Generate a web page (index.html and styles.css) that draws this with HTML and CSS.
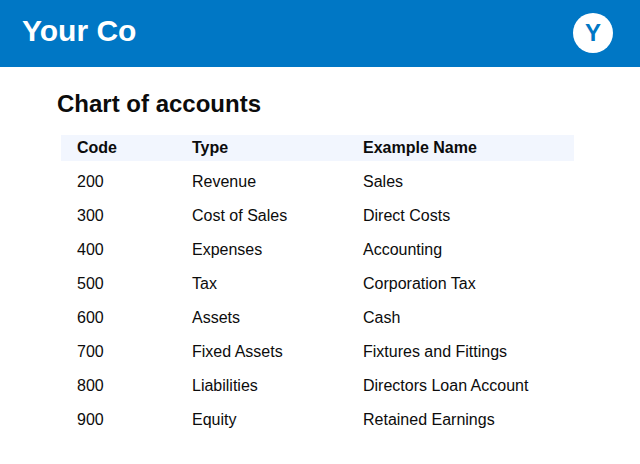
FILE: index.html

```html
<!DOCTYPE html>
<html lang="en">
<head>
  <meta charset="UTF-8">
  <title>Chart of accounts</title>
  <link rel="stylesheet" href="styles.css">
</head>
<body>
  <!-- Top bar -->
  <header class="topbar">
    <div class="brand">Your Co</div>
    <div class="avatar">Y</div>
  </header>

  <main class="content">
    <h1>Chart of accounts</h1>

    <table class="accounts">
      <thead>
        <tr><th class="col-code">Code</th><th class="col-type">Type</th><th>Example Name</th></tr>
      </thead>
      <tbody>
        <tr><td>200</td><td>Revenue</td><td>Sales</td></tr>
        <tr><td>300</td><td>Cost of Sales</td><td>Direct Costs</td></tr>
        <tr><td>400</td><td>Expenses</td><td>Accounting</td></tr>
        <tr><td>500</td><td>Tax</td><td>Corporation Tax</td></tr>
        <tr><td>600</td><td>Assets</td><td>Cash</td></tr>
        <tr><td>700</td><td>Fixed Assets</td><td>Fixtures and Fittings</td></tr>
        <tr><td>800</td><td>Liabilities</td><td>Directors Loan Account</td></tr>
        <tr><td>900</td><td>Equity</td><td>Retained Earnings</td></tr>
      </tbody>
    </table>
  </main>
</body>
</html>
```

FILE: styles.css

```css
body {
  margin: 0;
  font-family: "Liberation Sans", Arial, sans-serif;
  color: #0c0c0c;
  background: #fff;
}

.topbar {
  display: flex;
  justify-content: space-between;
  align-items: flex-start;
  height: 67px;
  padding: 13px 27px 0 22px;
  box-sizing: border-box;
  background: #0077c5;
}

.brand {
  color: #fff;
  font-size: 30px;
  font-weight: bold;
  line-height: 36px;
}

.avatar {
  width: 40px;
  height: 40px;
  border-radius: 50%;
  background: #fff;
  color: #0077c5;
  font-size: 24px;
  font-weight: bold;
  line-height: 40px;
  text-align: center;
}

.content {
  padding: 0 66px 0 57px;
}

h1 {
  margin: 23px 0 17px;
  font-size: 24px;
  line-height: 28px;
}

.accounts {
  width: 513px;
  margin-left: 4px;
  border-collapse: collapse;
  font-size: 16px;
}

.accounts th {
  height: 26px;
  padding: 0 0 0 16px;
  background: #f2f6fe;
  text-align: left;
}

.accounts td {
  padding: 8px 0 0 16px;
  line-height: 26px;
}

.col-code {
  width: 99px;
}

.col-type {
  width: 155px;
}
```
